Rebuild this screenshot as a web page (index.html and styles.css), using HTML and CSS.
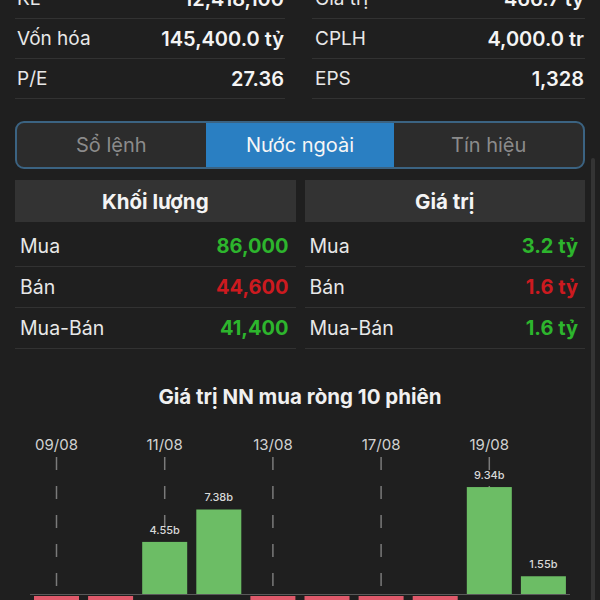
FILE: index.html
```html
<!DOCTYPE html>
<html>

<head lang="vi">
    <meta charset="utf-8" />
    <meta name="viewport" content="width=device-width, initial-scale=1" />
    <title>Nước ngoài</title>
    <link rel="stylesheet" href="styles.css">
</head>

<body>
    <div class="scrollbar"></div>

    <section class="info">
        <div class="info-col">
            <div class="info-row"><span>KL</span><b>12,418,100</b></div>
            <div class="info-row"><span>Vốn hóa</span><b>145,400.0 tỷ</b></div>
            <div class="info-row"><span>P/E</span><b>27.36</b></div>
        </div>
        <div class="info-col">
            <div class="info-row"><span>Giá trị</span><b>466.7 tỷ</b></div>
            <div class="info-row"><span>CPLH</span><b>4,000.0 tr</b></div>
            <div class="info-row"><span>EPS</span><b>1,328</b></div>
        </div>
    </section>

    <nav class="tabs">
        <a href="#">Sổ lệnh</a>
        <a href="#" class="active">Nước ngoài</a>
        <a href="#">Tín hiệu</a>
    </nav>

    <section class="foreign">
        <div class="table">
            <div class="table-head">Khối lượng</div>
            <div class="table-row"><span>Mua</span><b class="up">86,000</b></div>
            <div class="table-row"><span>Bán</span><b class="down">44,600</b></div>
            <div class="table-row"><span>Mua-Bán</span><b class="up">41,400</b></div>
        </div>
        <div class="table">
            <div class="table-head">Giá trị</div>
            <div class="table-row"><span>Mua</span><b class="up">3.2 tỷ</b></div>
            <div class="table-row"><span>Bán</span><b class="down">1.6 tỷ</b></div>
            <div class="table-row"><span>Mua-Bán</span><b class="up">1.6 tỷ</b></div>
        </div>
    </section>

    <h3 class="chart-title">Giá trị NN mua ròng 10 phiên</h3>
    <svg class="chart" id="chart" width="600" height="200" viewBox="0 0 600 200"></svg>

    <script type="text/javascript">
        // net foreign value per session, in billions
        var sessions = [
            { date: "09/08", value: -2 },
            { date: "10/08", value: -2 },
            { date: "11/08", value: 4.55 },
            { date: "12/08", value: 7.38 },
            { date: "13/08", value: -2 },
            { date: "16/08", value: -2 },
            { date: "17/08", value: -2 },
            { date: "18/08", value: -2 },
            { date: "19/08", value: 9.34 },
            { date: "20/08", value: 1.55 }
        ];

        var ns = "http://www.w3.org/2000/svg";
        var chart = document.getElementById("chart");
        var zero = 185;
        var scale = 11.45;
        var left = 34;
        var pitch = 54.1;
        var barWidth = 45;

        function add(tag, attrs, text) {
            var el = document.createElementNS(ns, tag);
            for (var k in attrs) {
                el.setAttribute(k, attrs[k]);
            }
            if (text) {
                el.textContent = text;
            }
            chart.appendChild(el);
            return el;
        }

        // date labels + dashed guides on every other session
        for (var i = 0; i < sessions.length; i += 2) {
            var cx = left + i * pitch + barWidth / 2;
            add("text", { x: cx, y: 41, "class": "date" }, sessions[i].date);
            add("line", { x1: cx, y1: 48, x2: cx, y2: 181, "class": "guide" });
        }

        for (var i = 0; i < sessions.length; i++) {
            var s = sessions[i];
            var x = left + i * pitch;
            var h = Math.abs(s.value) * scale;
            if (s.value > 0) {
                add("rect", { x: x, y: zero - h, width: barWidth, height: h, "class": "bar-up" });
                add("text", { x: x + barWidth / 2, y: zero - h - 8, "class": "bar-label" }, s.value.toFixed(2) + "b");
            } else {
                add("rect", { x: x, y: zero + 2, width: barWidth, height: h, "class": "bar-down" });
            }
        }

        add("line", { x1: 30, y1: 185.5, x2: 570, y2: 185.5, "class": "axis" });
    </script>
</body>

</html>
```

FILE: styles.css
```css
body {
    margin: 0;
    overflow: hidden;
    background-color: #1f1f1f;
    color: #e8e8e8;
    font-family: Inter, "Noto Sans", sans-serif;
    font-size: 19px;
}

.scrollbar {
    position: absolute;
    left: 591px;
    top: 158px;
    width: 4px;
    height: 460px;
    border-radius: 2px;
    background-color: #343434;
}

.info {
    display: grid;
    grid-template-columns: 270px 273px;
    column-gap: 27px;
    padding: 0 15px;
    margin-top: -21px;
}

.info-row {
    display: flex;
    justify-content: space-between;
    align-items: center;
    height: 39px;
    border-bottom: 1px solid #323232;
    padding: 0 1px 0 2px;
}

.info-col:last-child .info-row {
    padding-left: 3px;
}

.info-row b,
.table-row b {
    font-size: 20px;
    font-weight: 600;
    color: #f4f4f4;
}

.table-row b {
    font-weight: 700;
}

.tabs {
    display: flex;
    margin: 22px 15px 0 15px;
    height: 44px;
    border: 2px solid #3b6382;
    border-radius: 9px;
    overflow: hidden;
    background-color: #2c2c2c;
    font-size: 20px;
}

.tabs a {
    flex: 1;
    display: flex;
    align-items: center;
    justify-content: center;
    color: #8b8b8b;
    text-decoration: none;
}

.tabs a.active {
    background-color: #2a7fc2;
    color: #f6f6f6;
}

.foreign {
    display: grid;
    grid-template-columns: 1fr 1fr;
    column-gap: 9px;
    padding: 0 15px;
    margin-top: 11px;
}

.table-head {
    height: 42px;
    display: flex;
    align-items: center;
    justify-content: center;
    background-color: #333333;
    font-size: 20.5px;
    font-weight: 700;
    color: #f4f4f4;
    margin-bottom: 4px;
}

.table-row {
    display: flex;
    justify-content: space-between;
    align-items: center;
    height: 40px;
    border-bottom: 1px solid #323232;
    padding: 0 7px 0 5px;
    font-size: 19.5px;
}

.table-row b.up {
    color: #2db52d;
}

.table-row b.down {
    color: #cc1a1f;
}

.chart-title {
    margin: 36px 0 0 0;
    height: 24px;
    line-height: 24px;
    text-align: center;
    font-size: 20.5px;
    font-weight: 700;
    color: #f0f0f0;
}

.chart {
    display: block;
    margin-top: 0;
}

.chart .date {
    fill: #d2d2d2;
    font-size: 15px;
    text-anchor: middle;
}

.chart .guide {
    stroke: #7a7a7a;
    stroke-width: 1.5;
    stroke-dasharray: 13 16;
}

.chart .bar-up {
    fill: #6cbd65;
}

.chart .bar-down {
    fill: #e05a6b;
}

.chart .bar-label {
    fill: #d8d8d8;
    font-size: 11px;
    font-weight: 500;
    text-anchor: middle;
}

.chart .axis {
    stroke: #5a5a5a;
    stroke-width: 1;
}
```
